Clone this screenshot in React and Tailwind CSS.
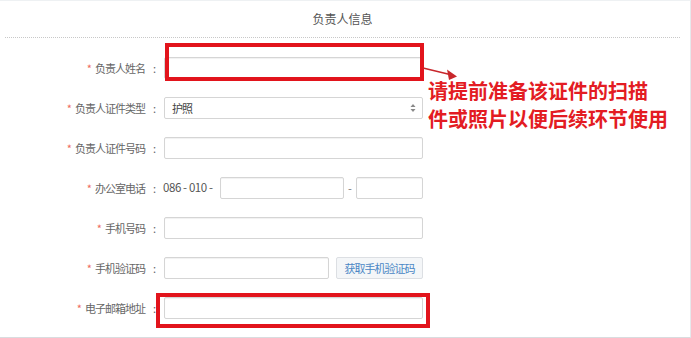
import React from "react";

const font = { fontFamily: '"Noto Sans CJK SC", "Noto Sans", sans-serif' };

const Label = ({ text }) => (
  <div className="w-[160px] shrink-0 pr-[2px] flex items-center justify-end text-[11px] tracking-[-1px] text-[#666]">
    <span className="text-[#ee6b5c] mr-[4px]">*</span>
    <span>{text}</span>
    <span className="ml-[8px] mr-[2px] tracking-normal">:</span>
  </div>
);

const Input = ({ w = "w-[259px]" }) => (
  <div className={`${w} h-[22px] border border-[#d5d5d5] bg-white rounded-[2px] shadow-[inset_0_1px_1px_rgba(0,0,0,0.06)]`} />
);

const App = () => {
  return (
    <div
      className="relative w-[691px] h-[338px] bg-white border-t border-r border-b border-t-[#eef1f3] border-r-[#e6e9ec] border-b-[#d9dcdf] overflow-hidden"
      style={font}
    >
      {/* Header */}
      <div className="h-[37px] ml-[5px] mr-[10px] flex items-center justify-center border-b border-dotted border-[#c8c8c8] text-[12px] text-[#555]">
        负责人信息
      </div>

      {/* Form rows */}
      <div className="pt-[10px]">
        <div className="flex items-center h-[40px]">
          <Label text="负责人姓名" />
          <div className="relative ml-[4px]">
            <Input />
            <div className="absolute left-[1px] top-[-14px] w-[259px] h-[38px] border-[4px] border-[#e2141c]" />
          </div>
        </div>

        <div className="flex items-center h-[40px]">
          <Label text="负责人证件类型" />
          <div className="ml-[4px] w-[259px] h-[22px] border border-[#d5d5d5] rounded-[2px] flex items-center justify-between pl-[7px] pr-[6px] text-[11px] tracking-[-1px] text-[#444]">
            <span>护照</span>
            <svg width="6" height="10" viewBox="0 0 6 10">
              <path d="M0.5 4 L3 1 L5.5 4 Z" fill="#888" />
              <path d="M0.5 6 L3 9 L5.5 6 Z" fill="#888" />
            </svg>
          </div>
        </div>

        <div className="flex items-center h-[40px]">
          <Label text="负责人证件号码" />
          <div className="ml-[4px]">
            <Input />
          </div>
        </div>

        <div className="flex items-center h-[40px]">
          <Label text="办公室电话" />
          <span className="ml-[3px] w-[53px] text-[11.5px] tracking-[-0.4px] text-[#555] whitespace-nowrap">086 - 010 -</span>
          <div className="ml-[4px]">
            <Input w="w-[124px]" />
          </div>
          <span className="w-[12px] text-center text-[11px] text-[#777]">-</span>
          <Input w="w-[67px]" />
        </div>

        <div className="flex items-center h-[40px]">
          <Label text="手机号码" />
          <div className="ml-[4px]">
            <Input />
          </div>
        </div>

        <div className="flex items-center h-[40px]">
          <Label text="手机验证码" />
          <div className="ml-[4px]">
            <Input w="w-[165px]" />
          </div>
          <button className="ml-[7px] w-[87px] h-[22px] bg-[#f4f6f8] border border-[#dcdfe3] rounded-[2px] text-[11px] tracking-[-1px] text-[#4a86c5]">
            获取手机验证码
          </button>
        </div>

        <div className="flex items-center h-[40px]">
          <Label text="电子邮箱地址" />
          <div className="relative ml-[4px]">
            <Input />
            <div className="absolute left-[-8px] top-[-4px] w-[274px] h-[35px] border-[4px] border-[#e2141c]" />
          </div>
        </div>
      </div>

      {/* Annotation arrow */}
      <svg className="absolute left-[420px] top-[62px]" width="42" height="20" viewBox="0 0 42 20">
        <line x1="3" y1="5" x2="32" y2="12" stroke="#c8262b" strokeWidth="1.5" />
        <path d="M37 13.5 L27 6.5 L29 17 Z" fill="#c8262b" />
      </svg>

      {/* Annotation text */}
      <div className="absolute left-[428px] top-[76px] text-[20px] leading-[28px] font-bold text-[#e31c23]">
        <div>请提前准备该证件的扫描</div>
        <div>件或照片以便后续环节使用</div>
      </div>
    </div>
  );
};

export default App;
